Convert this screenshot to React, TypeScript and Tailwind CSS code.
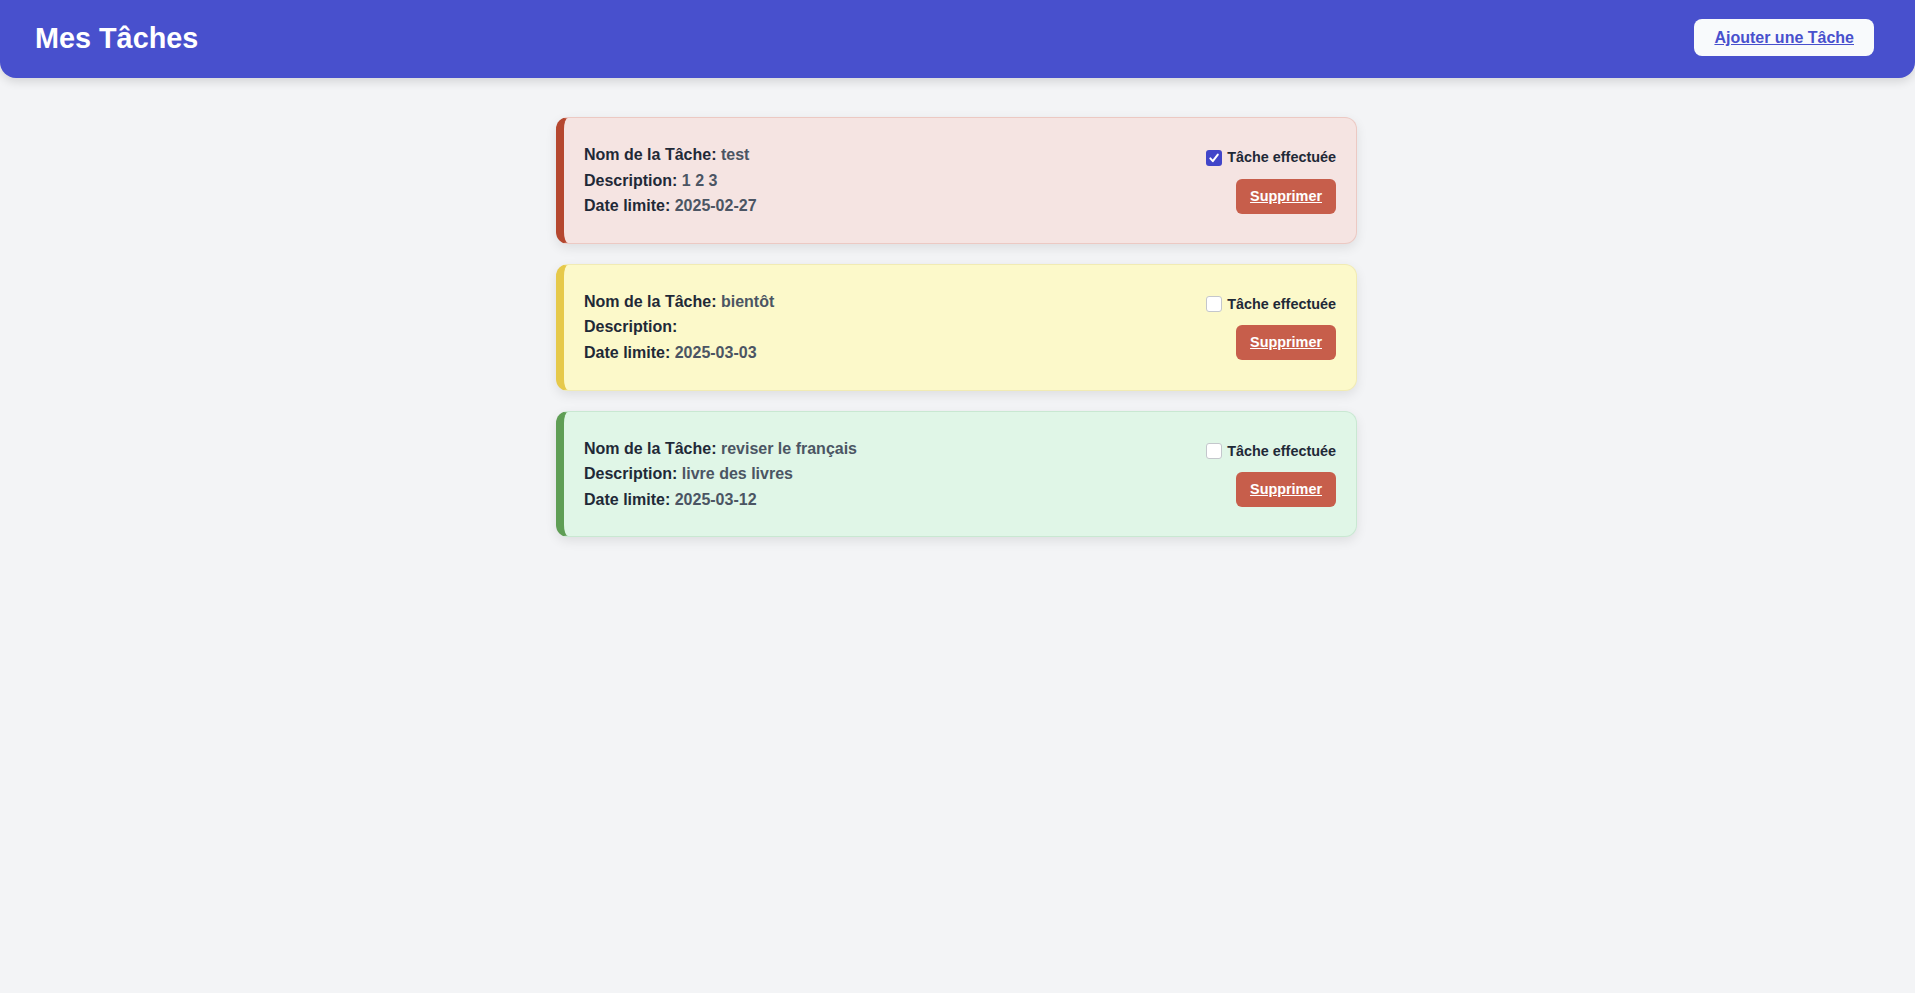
import React from "react";

type Task = {
  name: string;
  description: string;
  date: string;
  done: boolean;
  tone: "red" | "yellow" | "green";
};

const tasks: Task[] = [
  { name: "test", description: "1 2 3", date: "2025-02-27", done: true, tone: "red" },
  { name: "bientôt", description: "", date: "2025-03-03", done: false, tone: "yellow" },
  { name: "reviser le français", description: "livre des livres", date: "2025-03-12", done: false, tone: "green" },
];

const toneClasses: Record<Task["tone"], string> = {
  red: "bg-[#f5e4e2] border-[#ecc9c3] border-l-[#b5472f]",
  yellow: "bg-[#fcf9ca] border-[#f1ebb4] border-l-[#e6c94a]",
  green: "bg-[#e0f6e7] border-[#c9e8d2] border-l-[#5f9e55]",
};

function Checkbox({ checked }: { checked: boolean }) {
  if (checked) {
    return (
      <span className="flex h-[16px] w-[16px] items-center justify-center rounded-[3px] bg-[#4145c9]">
        <svg width="12" height="12" viewBox="0 0 12 12" fill="none">
          <path d="M2.3 6.4 L4.8 9.2 L9.8 2.6" stroke="white" strokeWidth="2" strokeLinecap="round" strokeLinejoin="round" />
        </svg>
      </span>
    );
  }
  return <span className="block h-[16px] w-[16px] rounded-[3px] border border-[#c4c7cc] bg-white" />;
}

function TaskCard({ task }: { task: Task }) {
  return (
    <div
      className={`flex w-[801px] items-center justify-between rounded-[12px] border border-l-[8px] px-[20px] py-[24px] shadow-[0_4px_12px_rgba(0,0,0,0.09)] ${toneClasses[task.tone]}`}
    >
      <div className="flex flex-col text-[16px] leading-[25.6px] font-bold">
        <p className="text-[#1f2937]">
          Nom de la Tâche: <span className="text-[#4b5563]">{task.name}</span>
        </p>
        <p className="text-[#1f2937]">
          Description: <span className="text-[#4b5563]">{task.description}</span>
        </p>
        <p className="text-[#1f2937]">
          Date limite: <span className="text-[#4b5563]">{task.date}</span>
        </p>
      </div>
      <div className="flex flex-col items-end gap-[12.5px] pt-[2px]">
        <label className="flex h-[17px] items-center gap-[5px]">
          <Checkbox checked={task.done} />
          <span className="text-[14.4px] leading-[17px] font-bold text-[#1f2937]">Tâche effectuée</span>
        </label>
        <button className="rounded-[6px] bg-[#c75e4b] px-[14px] py-[8px] text-[14.4px] leading-[19px] font-bold text-white underline">
          Supprimer
        </button>
      </div>
    </div>
  );
}

export default function App() {
  return (
    <div className="min-h-[993px] bg-[#f3f4f6] font-['Liberation_Sans',Arial,sans-serif]">
      <header className="flex h-[78px] items-center justify-between rounded-b-[16px] bg-[#4850cd] pb-[3px] pl-[35px] pr-[41px] shadow-[0_4px_10px_rgba(0,0,0,0.12)]">
        <h1 className="text-[28.8px] leading-[34px] font-bold text-white">Mes Tâches</h1>
        <button className="rounded-[8px] bg-[#f8fafc] px-[20px] py-[8px] text-[16px] leading-[21px] font-bold text-[#4850cd] underline">
          Ajouter une Tâche
        </button>
      </header>
      <main className="flex flex-col items-center gap-[20px] pt-[39px] pr-[2px]">
        {tasks.map((t) => (
          <TaskCard key={t.name} task={t} />
        ))}
      </main>
    </div>
  );
}
